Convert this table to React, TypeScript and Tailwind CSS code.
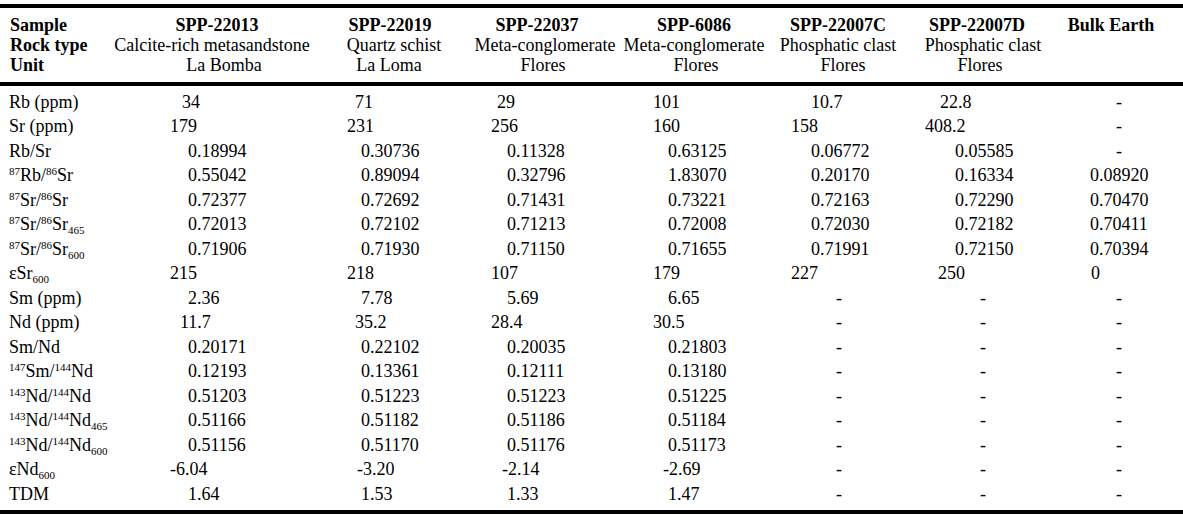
import React from "react";

type Cell = [string, string];

const F = { fontFamily: '"Liberation Serif", "Times New Roman", serif' };

const Sup = ({ children }: { children: React.ReactNode }) => (
  <span className="align-[6px] text-[11px] leading-none">{children}</span>
);
const Sub = ({ children }: { children: React.ReactNode }) => (
  <span className="align-[-4px] text-[11px] leading-none">{children}</span>
);

const D = "-";
const dash5: Cell = ["pl-[45px]", D];
const dash6: Cell = ["pl-[55px]", D];
const dash7: Cell = ["pl-[50px]", D];

const rows: { label: React.ReactNode; cells: Cell[] }[] = [
  {
    label: "Rb (ppm)",
    cells: [
      ["pl-[12px]", "34"],
      ["pl-[8px]", "71"],
      ["pl-[6px]", "29"],
      ["pl-0", "101"],
      ["pl-[20px]", "10.7"],
      ["pl-[15px]", "22.8"],
      dash7,
    ],
  },
  {
    label: "Sr (ppm)",
    cells: [
      ["pl-0", "179"],
      ["pl-0", "231"],
      ["pl-0", "256"],
      ["pl-0", "160"],
      ["pl-0", "158"],
      ["pl-0", "408.2"],
      dash7,
    ],
  },
  {
    label: "Rb/Sr",
    cells: [
      ["pl-[18px]", "0.18994"],
      ["pl-[14px]", "0.30736"],
      ["pl-[16px]", "0.11328"],
      ["pl-[15px]", "0.63125"],
      ["pl-[20px]", "0.06772"],
      ["pl-[30px]", "0.05585"],
      dash7,
    ],
  },
  {
    label: (
      <>
        <Sup>87</Sup>Rb/<Sup>86</Sup>Sr
      </>
    ),
    cells: [
      ["pl-[18px]", "0.55042"],
      ["pl-[14px]", "0.89094"],
      ["pl-[16px]", "0.32796"],
      ["pl-[15px]", "1.83070"],
      ["pl-[20px]", "0.20170"],
      ["pl-[30px]", "0.16334"],
      ["pl-[24px]", "0.08920"],
    ],
  },
  {
    label: (
      <>
        <Sup>87</Sup>Sr/<Sup>86</Sup>Sr
      </>
    ),
    cells: [
      ["pl-[18px]", "0.72377"],
      ["pl-[14px]", "0.72692"],
      ["pl-[16px]", "0.71431"],
      ["pl-[15px]", "0.73221"],
      ["pl-[20px]", "0.72163"],
      ["pl-[30px]", "0.72290"],
      ["pl-[24px]", "0.70470"],
    ],
  },
  {
    label: (
      <>
        <Sup>87</Sup>Sr/<Sup>86</Sup>Sr<Sub>465</Sub>
      </>
    ),
    cells: [
      ["pl-[18px]", "0.72013"],
      ["pl-[14px]", "0.72102"],
      ["pl-[16px]", "0.71213"],
      ["pl-[15px]", "0.72008"],
      ["pl-[20px]", "0.72030"],
      ["pl-[30px]", "0.72182"],
      ["pl-[24px]", "0.70411"],
    ],
  },
  {
    label: (
      <>
        <Sup>87</Sup>Sr/<Sup>86</Sup>Sr<Sub>600</Sub>
      </>
    ),
    cells: [
      ["pl-[18px]", "0.71906"],
      ["pl-[14px]", "0.71930"],
      ["pl-[16px]", "0.71150"],
      ["pl-[15px]", "0.71655"],
      ["pl-[20px]", "0.71991"],
      ["pl-[30px]", "0.72150"],
      ["pl-[24px]", "0.70394"],
    ],
  },
  {
    label: (
      <>
        εSr<Sub>600</Sub>
      </>
    ),
    cells: [
      ["pl-0", "215"],
      ["pl-0", "218"],
      ["pl-0", "107"],
      ["pl-0", "179"],
      ["pl-0", "227"],
      ["pl-[13px]", "250"],
      ["pl-[25px]", "0"],
    ],
  },
  {
    label: "Sm (ppm)",
    cells: [
      ["pl-[18px]", "2.36"],
      ["pl-[14px]", "7.78"],
      ["pl-[16px]", "5.69"],
      ["pl-[15px]", "6.65"],
      dash5,
      dash6,
      dash7,
    ],
  },
  {
    label: "Nd (ppm)",
    cells: [
      ["pl-[10px]", "11.7"],
      ["pl-[8px]", "35.2"],
      ["pl-0", "28.4"],
      ["pl-0", "30.5"],
      dash5,
      dash6,
      dash7,
    ],
  },
  {
    label: "Sm/Nd",
    cells: [
      ["pl-[18px]", "0.20171"],
      ["pl-[14px]", "0.22102"],
      ["pl-[16px]", "0.20035"],
      ["pl-[15px]", "0.21803"],
      dash5,
      dash6,
      dash7,
    ],
  },
  {
    label: (
      <>
        <Sup>147</Sup>Sm/<Sup>144</Sup>Nd
      </>
    ),
    cells: [
      ["pl-[18px]", "0.12193"],
      ["pl-[14px]", "0.13361"],
      ["pl-[16px]", "0.12111"],
      ["pl-[15px]", "0.13180"],
      dash5,
      dash6,
      dash7,
    ],
  },
  {
    label: (
      <>
        <Sup>143</Sup>Nd/<Sup>144</Sup>Nd
      </>
    ),
    cells: [
      ["pl-[18px]", "0.51203"],
      ["pl-[14px]", "0.51223"],
      ["pl-[16px]", "0.51223"],
      ["pl-[15px]", "0.51225"],
      dash5,
      dash6,
      dash7,
    ],
  },
  {
    label: (
      <>
        <Sup>143</Sup>Nd/<Sup>144</Sup>Nd<Sub>465</Sub>
      </>
    ),
    cells: [
      ["pl-[18px]", "0.51166"],
      ["pl-[14px]", "0.51182"],
      ["pl-[16px]", "0.51186"],
      ["pl-[15px]", "0.51184"],
      dash5,
      dash6,
      dash7,
    ],
  },
  {
    label: (
      <>
        <Sup>143</Sup>Nd/<Sup>144</Sup>Nd<Sub>600</Sub>
      </>
    ),
    cells: [
      ["pl-[18px]", "0.51156"],
      ["pl-[14px]", "0.51170"],
      ["pl-[16px]", "0.51176"],
      ["pl-[15px]", "0.51173"],
      dash5,
      dash6,
      dash7,
    ],
  },
  {
    label: (
      <>
        εNd<Sub>600</Sub>
      </>
    ),
    cells: [
      ["pl-0", "-6.04"],
      ["pl-[10px]", "-3.20"],
      ["pl-[11px]", "-2.14"],
      ["pl-[10px]", "-2.69"],
      dash5,
      dash6,
      dash7,
    ],
  },
  {
    label: "TDM",
    cells: [
      ["pl-[18px]", "1.64"],
      ["pl-[14px]", "1.53"],
      ["pl-[16px]", "1.33"],
      ["pl-[15px]", "1.47"],
      dash5,
      dash6,
      dash7,
    ],
  },
];

type HLine = [string, string];
const headers: { lines: HLine[] }[] = [
  {
    lines: [
      ["", "SPP-22013"],
      ["mr-[10px]", "Calcite-rich metasandstone"],
      ["ml-[14px]", "La Bomba"],
    ],
  },
  {
    lines: [
      ["", "SPP-22019"],
      ["ml-[8px]", "Quartz schist"],
      ["mr-[2px]", "La Loma"],
    ],
  },
  {
    lines: [
      ["mr-[8px]", "SPP-22037"],
      ["ml-[8px]", "Meta-conglomerate"],
      ["ml-[4px]", "Flores"],
    ],
  },
  {
    lines: [
      ["", "SPP-6086"],
      ["", "Meta-conglomerate"],
      ["ml-[4px]", "Flores"],
    ],
  },
  {
    lines: [
      ["", "SPP-22007C"],
      ["", "Phosphatic clast"],
      ["ml-[10px]", "Flores"],
    ],
  },
  {
    lines: [
      ["mr-[6px]", "SPP-22007D"],
      ["ml-[6px]", "Phosphatic clast"],
      ["", "Flores"],
    ],
  },
  {
    lines: [["", "Bulk Earth"]],
  },
];

export default function App() {
  return (
    <div className="w-[1183px] h-[524px] bg-white text-black overflow-hidden" style={F}>
      <div className="mt-[4px] h-[4px] bg-black" />
      <div className="grid grid-cols-[110px_214px_132px_170px_136px_152px_132px_130px] pt-[7px] pb-[6.5px] text-[18px] leading-[20px]">
        <div className="flex flex-col pl-[10px] font-bold">
          <span>Sample</span>
          <span>Rock type</span>
          <span>Unit</span>
        </div>
        {headers.map((h, i) => (
          <div key={i} className="flex flex-col items-center whitespace-nowrap">
            {h.lines.map(([cls, t], j) => (
              <span key={j} className={`${cls} ${j === 0 ? "font-bold" : ""}`}>
                {t}
              </span>
            ))}
          </div>
        ))}
      </div>
      <div className="h-[4px] bg-black" />
      <div className="pt-[4px] text-[18px]">
        {rows.map((r, i) => (
          <div
            key={i}
            className="grid grid-cols-[170px_177px_144px_162px_138px_134px_141px_117px] h-[24.5px] leading-[24.5px] whitespace-nowrap"
          >
            <div className="pl-[9px]">{r.label}</div>
            {r.cells.map(([cls, t], j) => (
              <div key={j} className={cls}>
                {t}
              </div>
            ))}
          </div>
        ))}
      </div>
      <div className="mt-[3.5px] h-[4px] bg-black" />
    </div>
  );
}
